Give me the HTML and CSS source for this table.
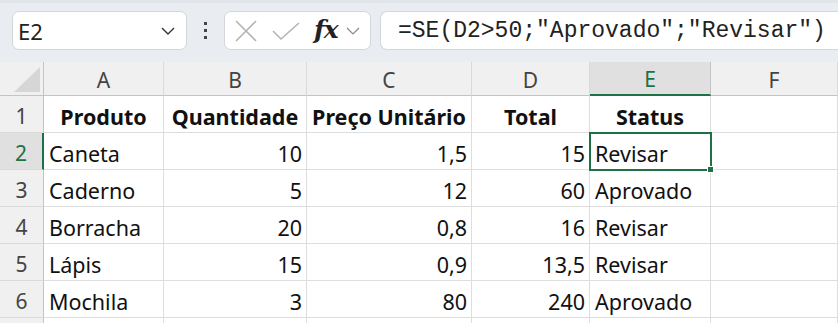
FILE: index.html
```html
<!DOCTYPE html>
<html lang="pt">
<head>
<meta charset="utf-8">
<link rel="stylesheet" href="styles.css">
</head>
<body>
<div class="toolbar">
  <div class="namebox">
    <span class="name">E2</span>
    <svg class="chev" width="14" height="8" viewBox="0 0 14 8"><path d="M1 1 L7 7 L13 1" fill="none" stroke="#333" stroke-width="1.4"/></svg>
  </div>
  <div class="dots"><i></i><i></i><i></i></div>
  <div class="fxbox">
    <svg class="ico" width="24" height="24" viewBox="0 0 24 24"><path d="M2 2 L22 22 M22 2 L2 22" stroke="#b4b4b4" stroke-width="1.6" fill="none"/></svg>
    <svg class="ico" width="28" height="20" viewBox="0 0 28 20"><path d="M1 9 L9 17 L27 1" stroke="#b4b4b4" stroke-width="1.6" fill="none"/></svg>
    <span class="fx">fx</span>
    <svg class="chev2" width="14" height="8" viewBox="0 0 14 8"><path d="M1 1 L7 7 L13 1" fill="none" stroke="#888" stroke-width="1.2"/></svg>
  </div>
  <div class="formula">=SE(D2&gt;50;"Aprovado";"Revisar")</div>
</div>
<div class="sheet">
  <div class="corner"><span class="tri"></span></div>
  <div class="ch">A</div><div class="ch">B</div><div class="ch">C</div><div class="ch">D</div><div class="ch sel">E</div><div class="ch">F</div>

  <div class="rh">1</div>
  <div class="c b">Produto</div><div class="c b">Quantidade</div><div class="c b">Preço Unitário</div><div class="c b">Total</div><div class="c b">Status</div><div class="c"></div>

  <div class="rh sel">2</div>
  <div class="c">Caneta</div><div class="c n">10</div><div class="c n">1,5</div><div class="c n">15</div><div class="c active">Revisar<span class="handle"></span></div><div class="c"></div>

  <div class="rh">3</div>
  <div class="c">Caderno</div><div class="c n">5</div><div class="c n">12</div><div class="c n">60</div><div class="c">Aprovado</div><div class="c"></div>

  <div class="rh">4</div>
  <div class="c">Borracha</div><div class="c n">20</div><div class="c n">0,8</div><div class="c n">16</div><div class="c">Revisar</div><div class="c"></div>

  <div class="rh">5</div>
  <div class="c">Lápis</div><div class="c n">15</div><div class="c n">0,9</div><div class="c n">13,5</div><div class="c">Revisar</div><div class="c"></div>

  <div class="rh">6</div>
  <div class="c">Mochila</div><div class="c n">3</div><div class="c n">80</div><div class="c n">240</div><div class="c">Aprovado</div><div class="c"></div>

  <div class="rh"></div>
  <div class="c"></div><div class="c"></div><div class="c"></div><div class="c"></div><div class="c"></div><div class="c"></div>
</div>
</body>
</html>
```

FILE: styles.css
```css
* { box-sizing: border-box; }
html, body { margin: 0; padding: 0; background: #fff; overflow: hidden; }
body { width: 838px; height: 323px; font-family: "Noto Sans", "Open Sans", sans-serif; }

.toolbar {
  height: 62px;
  background: #e9ecf0;
  border-top: 3px solid #e2e5e9;
  display: flex;
  align-items: flex-start;
  padding: 8px 0 0 12px;
}
.namebox {
  width: 175px; height: 39px;
  background: #fff;
  border: 1px solid #d3d6da;
  border-radius: 7px;
  display: flex; align-items: center; justify-content: space-between;
  padding: 0 11px 0 5px;
}
.name { font-family: "Noto Sans", sans-serif; font-size: 22px; color: #222; }
.dots { width: 37px; height: 39px; display: flex; flex-direction: column; align-items: center; justify-content: center; gap: 4px; }
.dots i { display: block; width: 3px; height: 3px; background: #444; }
.fxbox {
  width: 147px; height: 39px;
  background: #fff;
  border: 1px solid #d3d6da;
  border-radius: 7px;
  display: flex; align-items: center;
  padding: 0 0 0 9px;
}
.fxbox .ico:first-child { margin-right: 14px; }
.fxbox .ico:nth-child(2) { margin-right: 14px; margin-top: 2px; }
.fx { font-family: "DejaVu Serif", "Liberation Serif", serif; font-style: italic; font-weight: 700; font-size: 25px; color: #222; letter-spacing: -1px; margin-top: -2px; }
.chev2 { margin-left: 8px; }
.formula {
  margin-left: 9px;
  flex: 1;
  height: 39px;
  background: #fff;
  border: 1px solid #d3d6da;
  border-right: none;
  border-radius: 7px 0 0 7px;
  font-family: "Liberation Mono", "DejaVu Sans Mono", monospace;
  font-size: 23px;
  color: #222;
  display: flex; align-items: center;
  padding-left: 17px;
  white-space: nowrap;
}

.sheet {
  display: grid;
  grid-template-columns: 44px 120px 143px 165px 118px 121px 1fr;
  grid-template-rows: 34px repeat(7, 37px);
}
.corner { background: #f0f0f0; border-right: 1px solid #c4c4c4; border-bottom: 1px solid #c4c4c4; position: relative; }
.tri { position: absolute; right: 3px; bottom: 3px; width: 0; height: 0; border-style: solid; border-width: 0 0 25px 26px; border-color: transparent transparent #d6d6d6 transparent; }
.ch {
  background: #f0f0f0;
  border-right: 1px solid #dadada;
  border-bottom: 1px solid #c4c4c4;
  display: flex; align-items: center; justify-content: center;
  font-family: "Noto Sans", sans-serif;
  font-size: 21px; color: #444;
  padding-top: 2px;
}
.ch.sel { background: #e0e0e0; color: #1e7145; border-bottom: 2px solid #1e7145; border-right-color: #c4c4c4; }
.rh {
  background: #f0f0f0;
  border-right: 1px solid #c4c4c4;
  border-bottom: 1px solid #dadada;
  display: flex; align-items: center; justify-content: center;
  font-family: "Noto Sans", sans-serif;
  font-size: 21px; color: #444;
  padding-top: 4px;
}
.rh.sel { background: #e0e0e0; color: #1e7145; border-right: 2px solid #1e7145; }
.c {
  border-right: 1px solid #dedede;
  border-bottom: 1px solid #dedede;
  font-size: 21.5px; color: #111;
  display: flex; align-items: center;
  padding: 5px 4px 0 5px;
  white-space: nowrap;
  position: relative;
}
.c.b { font-weight: 700; justify-content: center; padding-left: 0; padding-right: 0; }
.c.n { justify-content: flex-end; }
.c.active { outline: 2px solid #1e7145; outline-offset: -1px; z-index: 1; }
.handle { position: absolute; right: -4px; bottom: -4px; width: 7px; height: 7px; background: #1e7145; border: 1px solid #fff; }
```
